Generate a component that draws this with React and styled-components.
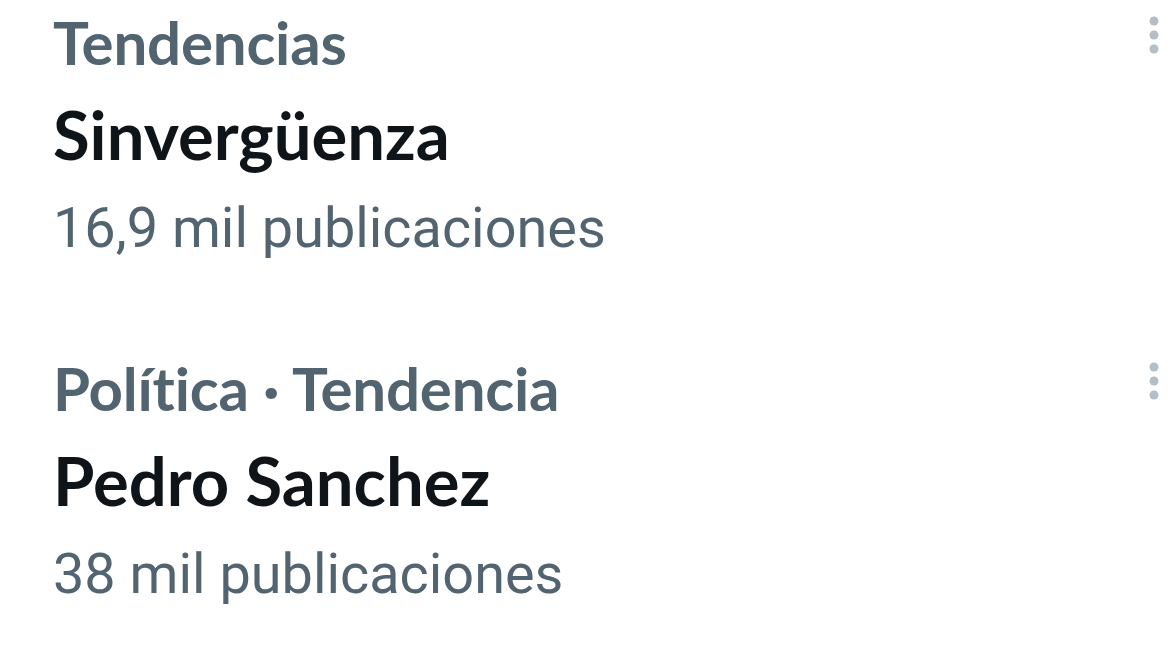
import React from 'react';
import styled, { createGlobalStyle } from 'styled-components';

const GlobalStyle = createGlobalStyle`
  html, body {
    margin: 0;
    padding: 0;
    background: #ffffff;
  }
`;

const List = styled.div`
  width: 1169px;
  height: 663px;
  overflow: hidden;
  display: flex;
  flex-direction: column;
  gap: 74px;
`;

const Trend = styled.div`
  display: flex;
  justify-content: space-between;
  padding-left: 53px;
  padding-right: 7px;
`;

const Texts = styled.div`
  display: flex;
  flex-direction: column;
`;

const Context = styled.div`
  font-family: Lato, "Noto Sans", sans-serif;
  font-weight: 700;
  font-size: 60px;
  line-height: 84px;
  font-variant-ligatures: none;
  letter-spacing: -0.2px;
  color: #536471;
`;

const Title = styled.div`
  font-family: Lato, "Noto Sans", sans-serif;
  font-weight: 700;
  font-size: 67px;
  line-height: 100px;
  font-variant-ligatures: none;
  color: #0f1419;
`;

const Count = styled.div`
  font-family: Roboto, "Liberation Sans", sans-serif;
  font-weight: 400;
  font-size: 55.8px;
  line-height: 88px;
  color: #536471;
`;

const MenuButton = styled.button`
  border: none;
  background: none;
  padding: 0;
  margin-top: 12px;
  width: 16px;
  height: 46px;
  align-self: flex-start;
`;

const Dots = () => (
  <svg width="16" height="46" viewBox="0 0 16 46">
    <circle cx="8" cy="9" r="4.5" fill="#b4bec6" />
    <circle cx="8" cy="23" r="4.5" fill="#b4bec6" />
    <circle cx="8" cy="37" r="4.5" fill="#b4bec6" />
  </svg>
);

const trends = [
  { context: 'Tendencias', title: 'Sinvergüenza', count: '16,9 mil publicaciones' },
  { context: 'Política · Tendencia', title: 'Pedro Sanchez', count: '38 mil publicaciones' },
];

export default function App() {
  return (
    <>
      <GlobalStyle />
      <List>
        {trends.map((t) => (
          <Trend key={t.title}>
            <Texts>
              <Context>{t.context}</Context>
              <Title>{t.title}</Title>
              <Count>{t.count}</Count>
            </Texts>
            <MenuButton aria-label="Más opciones">
              <Dots />
            </MenuButton>
          </Trend>
        ))}
      </List>
    </>
  );
}
